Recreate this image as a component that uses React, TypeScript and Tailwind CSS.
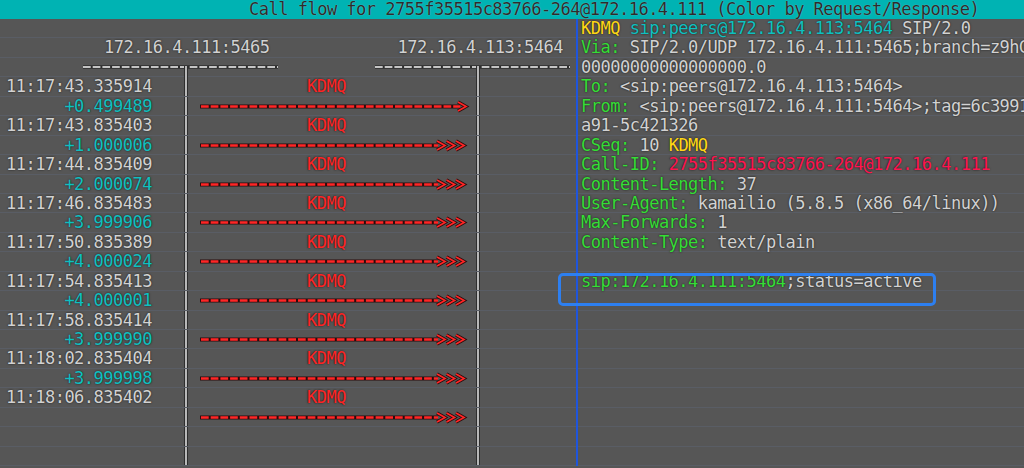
import React from "react";

const ROW = "h-[19.45px] leading-[19.45px] shrink-0 border-b border-[#595d65]";
const MONO = "font-['DejaVu_Sans_Mono',monospace] text-[17px] tracking-[-0.5px] [text-shadow:0_0_2px_rgba(0,0,0,0.75)]";

const W = "text-[#d2d2d2]";
const G = "text-[#36dd36]";
const C = "text-[#10c0c0]";
const Y = "text-[#ffd814]";
const R = "text-[#ff1450]";

type Seg = [string, string];

const detail: Seg[][] = [
  [["KDMQ", Y], [" sip:peers@172.16.4.113:5464", C], [" SIP/2.0", W]],
  [["Via:", G], [" SIP/2.0/UDP 172.16.4.111:5465;branch=z9hG4bK7c2e.1f09", W]],
  [["00000000000000000.0", W]],
  [["To:", G], [" <sip:peers@172.16.4.113:5464>", W]],
  [["From:", G], [" <sip:peers@172.16.4.111:5464>;tag=6c39914e2b7", W]],
  [["a91-5c421326", W]],
  [["CSeq:", G], [" 10", W], [" KDMQ", Y]],
  [["Call-ID:", G], [" ", W], ["2755f35515c83766-264@172.16.4.111", R]],
  [["Content-Length:", G], [" 37", W]],
  [["User-Agent:", G], [" kamailio (5.8.5 (x86_64/linux))", W]],
  [["Max-Forwards:", G], [" 1", W]],
  [["Content-Type:", G], [" text/plain", W]],
  [],
  [["sip:172.16.4.111:5464", G], [";status=active", W]],
];

const events: { time: string; delta?: string; retrans: boolean }[] = [
  { time: "11:17:43.335914", delta: "+0.499489", retrans: false },
  { time: "11:17:43.835403", delta: "+1.000006", retrans: true },
  { time: "11:17:44.835409", delta: "+2.000074", retrans: true },
  { time: "11:17:46.835483", delta: "+3.999906", retrans: true },
  { time: "11:17:50.835389", delta: "+4.000024", retrans: true },
  { time: "11:17:54.835413", delta: "+4.000001", retrans: true },
  { time: "11:17:58.835414", delta: "+3.999990", retrans: true },
  { time: "11:18:02.835404", delta: "+3.999998", retrans: true },
  { time: "11:18:06.835402", retrans: true },
];

function Lifeline() {
  return <div className="w-[4px] shrink-0 border-x border-[#2e2e2e] bg-[#b8b8b8]" />;
}

function Chevron({ tip }: { tip: number }) {
  const pts = `${tip - 8},5 ${tip},9.5 ${tip - 8},14`;
  return (
    <>
      <polyline points={pts} fill="none" stroke="#2a0c0c" strokeWidth="3.4" />
      <polyline points={pts} fill="none" stroke="#ff2626" strokeWidth="1.7" />
    </>
  );
}

function Arrow({ retrans }: { retrans: boolean }) {
  const end = retrans ? 250 : 272;
  const tips = retrans ? [257, 266.5, 276] : [278];
  return (
    <svg width="288" height="19" className="block">
      <line x1="12" y1="9.5" x2={end} y2="9.5" stroke="#2a0c0c" strokeWidth="4.2" />
      <line x1="13" y1="9.5" x2={end} y2="9.5" stroke="#ff2626" strokeWidth="2.4" strokeDasharray="7.7 2" />
      {tips.map((t) => (
        <Chevron key={t} tip={t} />
      ))}
    </svg>
  );
}

function Lane({ time, timeClass, children }: { time?: string; timeClass?: string; children?: React.ReactNode }) {
  return (
    <div className={`flex ${ROW}`}>
      <div className={`w-[152px] shrink-0 text-right ${timeClass ?? W}`}>{time}</div>
      <div className="w-[32px] shrink-0" />
      <Lifeline />
      <div className="w-[288px] shrink-0">{children}</div>
      <Lifeline />
      <div className="flex-1" />
    </div>
  );
}

function HeaderLine() {
  return (
    <div className={ROW}>
      <svg width="576" height="19" className="block">
        {[
          [83, 278, 186],
          [375, 570, 478],
        ].map(([a, b, x]) => (
          <g key={x}>
            <line x1={a} y1="9" x2={b} y2="9" stroke="#2e2e2e" strokeWidth="3.6" />
            <line x1={a} y1="9" x2={b} y2="9" stroke="#c4c4c4" strokeWidth="1.8" strokeDasharray="7.7 2" />
            <rect x={x - 2} y="8" width="4" height="12" fill="#2e2e2e" />
            <rect x={x - 1} y="8" width="2" height="12" fill="#b8b8b8" />
          </g>
        ))}
      </svg>
    </div>
  );
}

export default function App() {
  const flowRows: React.ReactNode[] = [];
  events.forEach((e, i) => {
    flowRows.push(
      <Lane key={`t${i}`} time={e.time}>
        <span className="pl-[119px] text-[#ff2424]">KDMQ</span>
      </Lane>
    );
    flowRows.push(
      <Lane key={`d${i}`} time={e.delta} timeClass={C}>
        <Arrow retrans={e.retrans && i > 0} />
      </Lane>
    );
  });

  return (
    <div className={`relative h-[468px] w-[1024px] overflow-hidden bg-[#565656] ${MONO}`}>
      <div className="h-[19px] leading-[19px] bg-[#00b3b3] pl-[249px] whitespace-nowrap text-[#2c2c2c] [text-shadow:0_0_1px_rgba(255,255,255,0.5)]">
        Call flow for 2755f35515c83766-264@172.16.4.111 (Color by Request/Response)
      </div>
      <div className="flex">
        <div className="flex w-[576px] shrink-0 flex-col">
          <div className={ROW} />
          <div className={`flex ${ROW} ${W}`}>
            <span className="pl-[104px]">172.16.4.111:5465</span>
            <span className="pl-[128px]">172.16.4.113:5464</span>
          </div>
          <HeaderLine />
          {flowRows}
          <Lane />
          <Lane />
        </div>
        <div className="flex min-w-0 flex-1 flex-col overflow-hidden border-l-2 border-[#1f55dc]">
          {detail.map((line, i) => (
            <div key={i} className={`${ROW} whitespace-pre pl-[3px]`}>
              {line.map(([t, c], j) => (
                <span key={j} className={c}>
                  {t}
                </span>
              ))}
            </div>
          ))}
          {Array.from({ length: 9 }).map((_, i) => (
            <div key={`e${i}`} className={ROW} />
          ))}
        </div>
      </div>
      <div className="absolute left-[558px] top-[273px] h-[33px] w-[378px] rounded-[5px] border-[3px] border-[#2d7ff0]" />
    </div>
  );
}
